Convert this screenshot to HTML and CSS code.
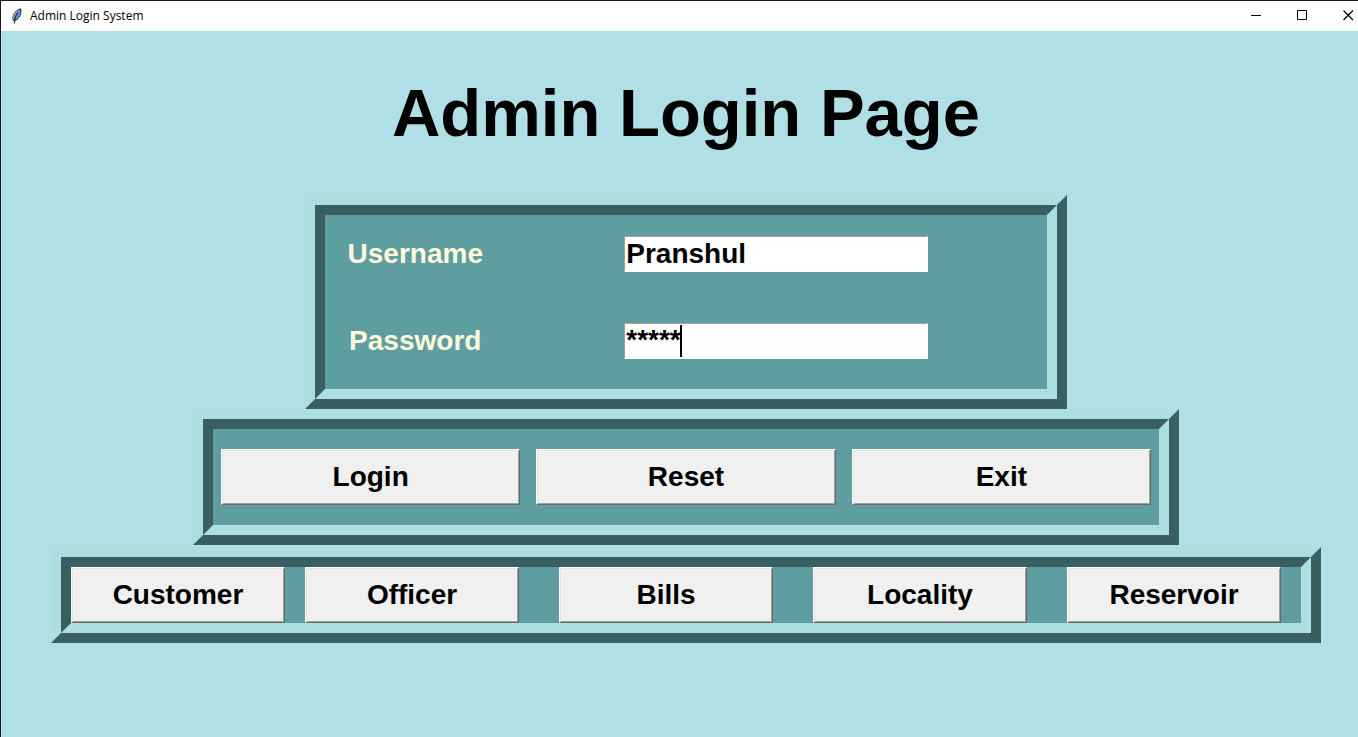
FILE: index.html
```
<!DOCTYPE html>
<html lang="en">
<head>
<meta charset="utf-8">
<title>Admin Login System</title>
<link rel="stylesheet" href="styles.css">
</head>
<body>
<div class="window">
  <header class="titlebar">
    <svg class="feather" width="12" height="16" viewBox="0 0 12 16" aria-hidden="true">
      <path d="M2.500 12.500C.8 8.500 3 3 9.500 .8C10.800 3.500 9.500 8.500 5.500 12Z" fill="#5b97dc" stroke="#161c22" stroke-width="1"/>
      <path d="M2.500 10.500C2 7.500 3.500 4.500 6.500 2.800" fill="none" stroke="#9fb0b8" stroke-width="1"/>
      <path d="M3.500 15.500C3.300 11.500 4.500 8 6.800 4.500" fill="none" stroke="#10161c" stroke-width="1"/>
    </svg>
    <span class="caption">Admin Login System</span>
    <div class="controls">
      <button type="button" class="control" aria-label="Minimize"><svg width="11" height="12" viewBox="0 0 11 12"><path d="M0 5.500H10" stroke="#000"/></svg></button>
      <button type="button" class="control" aria-label="Maximize"><svg width="11" height="12" viewBox="0 0 11 12"><path d="M.5 .5H9.500V9.500H.5Z" fill="none" stroke="#000"/></svg></button>
      <button type="button" class="control" aria-label="Close"><svg width="11" height="12" viewBox="0 0 11 12"><path d="M.5 .5L10 10M10 .5L.5 10" stroke="#000" stroke-width="1.200"/></svg></button>
    </div>
  </header>
  <main class="content">
    <h1 class="heading">Admin Login Page</h1>
    <form class="form">
      <div class="ridge ridge-fields">
        <div class="groove fields">
          <label class="label" for="username">Username</label>
          <div class="field"><input class="entry" id="username" type="text" value="Pranshul"></div>
          <label class="label" for="password">Password</label>
          <div class="field"><input class="entry masked" id="password" type="text" value="*****" autocomplete="off"><span class="caret"></span></div>
        </div>
      </div>
      <div class="ridge ridge-actions">
        <div class="groove actions">
          <button type="button" class="button">Login</button>
          <button type="button" class="button">Reset</button>
          <button type="button" class="button">Exit</button>
        </div>
      </div>
    </form>
    <nav class="ridge ridge-sections">
      <div class="groove sections">
        <button type="button" class="button">Customer</button>
        <button type="button" class="button">Officer</button>
        <button type="button" class="button spaced">Bills</button>
        <button type="button" class="button spaced">Locality</button>
        <button type="button" class="button spaced">Reservoir</button>
      </div>
    </nav>
  </main>
</div>
</body>
</html>
```
FILE: styles.css
```
* { box-sizing: border-box; }

body {
  margin: 0;
  font-family: "Liberation Sans", Arial, sans-serif;
}

.window {
  min-height: 100vh;
  border: solid #1a1a1a;
  border-width: 1px 0 0 1px;
  background: #b0e0e6;
}

.titlebar {
  display: flex;
  align-items: center;
  height: 30px;
  padding: 0 4px 0 10px;
  background: #fff;
  color: #000;
}

.caption {
  margin-left: 7px;
  font: 12px/16px "Open Sans", "Noto Sans", sans-serif;
}

.controls {
  display: flex;
  gap: 35px;
  margin-left: auto;
}

.control {
  display: flex;
  padding: 0;
  border: 0;
  background: none;
}

.content {
  display: flex;
  flex-direction: column;
  align-items: center;
  padding-left: 13px;
}

.heading {
  margin: 0;
  padding: 44px 0;
  font-size: 67px;
  line-height: 76px;
  font-weight: bold;
  color: #000;
}

.form {
  display: flex;
  flex-direction: column;
  align-items: center;
  width: 100%;
  margin-bottom: 2px;
}

.ridge {
  width: 100%;
  border: 10px solid;
  border-color: #aedfe0 #395f60 #395f60 #aedfe0;
}

.groove {
  border: 10px solid;
  border-color: #395f60 #aedfe0 #aedfe0 #395f60;
  background: #5f9ea0;
}

.ridge-fields { max-width: 762px; }
.ridge-actions { max-width: 986px; }
.ridge-sections { max-width: 1270px; }

.fields {
  display: grid;
  grid-template-columns: 1fr 3fr;
  row-gap: 51px;
  align-items: center;
  padding: 21px 0 30px;
}

.label {
  text-align: center;
  font-size: 28px;
  line-height: 36px;
  font-weight: bold;
  color: #fff8dc;
}

.field {
  position: relative;
  justify-self: center;
  width: 304px;
}

.entry {
  display: block;
  width: 100%;
  height: 36px;
  padding: 0 1px;
  border: 1px solid;
  border-color: #a0a0a0 #fff #fff #a0a0a0;
  background: #fff;
  font: bold 28px/32px "Liberation Sans", Arial, sans-serif;
  color: #000;
  outline: 0;
}

.masked { padding-bottom: 2px; }

.caret {
  position: absolute;
  top: 2px;
  left: 56px;
  width: 2px;
  height: 32px;
  background: #000;
}

.actions {
  display: flex;
  gap: 16px;
  padding: 20px 8px;
}

.sections {
  display: flex;
  gap: 20px;
  padding-right: 20px;
}

.button {
  flex: 1 1 0;
  min-width: 0;
  height: 56px;
  padding: 0;
  border: 1px solid;
  border-color: #fff #696969 #696969 #fff;
  border-radius: 0;
  background: #f0f0f0;
  box-shadow: inset 1px 1px #e3e3e3, inset -1px -1px #a0a0a0;
  font: bold 28px/32px "Liberation Sans", Arial, sans-serif;
  color: #000;
}

.spaced { margin-left: 20px; }
```
